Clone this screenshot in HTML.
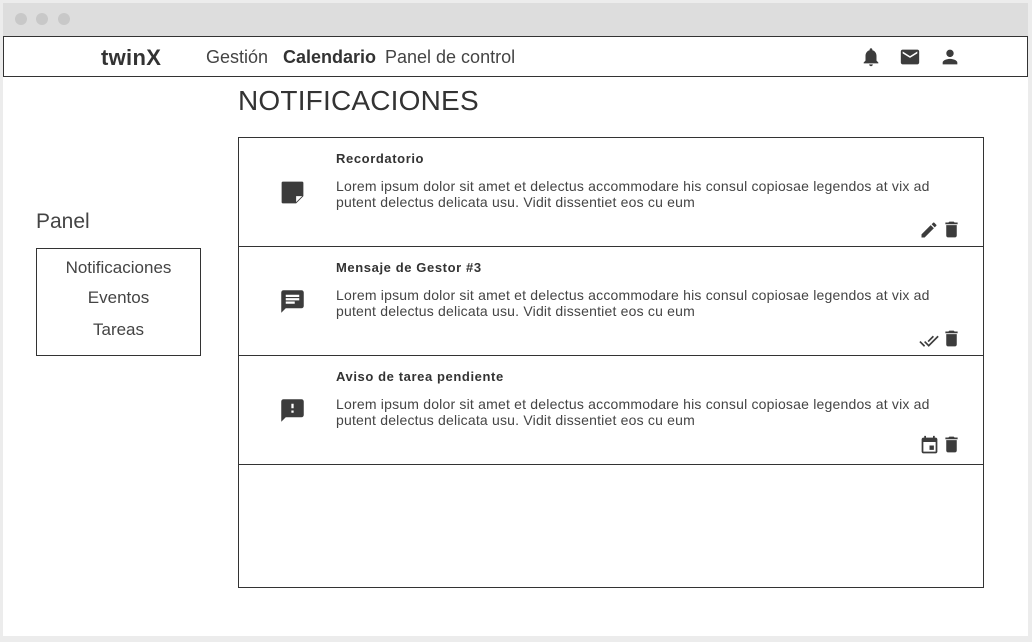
<!DOCTYPE html>
<html><head><meta charset="utf-8"><style>
*{margin:0;padding:0;box-sizing:border-box}
body{width:1032px;height:642px;background:#ececec;font-family:"Liberation Sans",sans-serif;color:#333;position:relative;overflow:hidden}
.win{position:absolute;left:3px;top:3px;width:1025px;height:633px;background:#fff}
.tb{position:absolute;left:0;top:0;width:100%;height:33px;background:#dddddd}
.dot{position:absolute;top:10px;width:12px;height:12px;border-radius:50%;background:#c8c8c8}
.nav{position:absolute;left:3px;top:36px;width:1025px;height:41px;border:1.5px solid #333;background:#fff}
.a{position:absolute;white-space:nowrap}
svg{position:absolute;fill:#3c3c3c}
.list{position:absolute;left:238px;top:137px;width:746px;height:451px;border:1px solid #333}
.row{position:absolute;left:0;width:100%;height:109px;border-bottom:1px solid #333}
.t{position:absolute;left:97px;top:13px;font-size:13px;font-weight:bold;color:#333;letter-spacing:.6px}
.b{position:absolute;left:97px;top:40px;font-size:14px;line-height:16px;color:#444;width:610px;letter-spacing:.2px}
</style></head><body>
<div class="win">
<div class="tb"><div class="dot" style="left:12px"></div><div class="dot" style="left:33px"></div><div class="dot" style="left:55px"></div></div>
</div>
<div class="nav">
<div class="a" style="left:97px;top:8px;font-size:22px;font-weight:bold;letter-spacing:.3px">twinX</div>
<div class="a" style="left:202px;top:10px;font-size:18px;color:#444">Gestión</div>
<div class="a" style="left:279px;top:10px;font-size:18px;font-weight:bold">Calendario</div>
<div class="a" style="left:381px;top:10px;font-size:18px;color:#444">Panel de control</div>
<svg style="left:856px;top:9px" width="22" height="22" viewBox="0 0 24 24"><path d="M12 22c1.1 0 2-.9 2-2h-4c0 1.1.9 2 2 2zm6-6v-5c0-3.07-1.64-5.64-4.5-6.32V4c0-.83-.67-1.5-1.5-1.5s-1.5.67-1.5 1.5v.68C7.630 5.360 6 7.920 6 11v5l-2 2v1h16v-1l-2-2z"/></svg>
<svg style="left:895px;top:9px" width="22" height="22" viewBox="0 0 24 24"><path d="M20 4H4c-1.1 0-2 .9-2 2v12c0 1.1.9 2 2 2h16c1.1 0 2-.9 2-2V6c0-1.1-.9-2-2-2zm0 4l-8 5-8-5V6l8 5 8-5v2z"/></svg>
<svg style="left:935px;top:9px" width="22" height="22" viewBox="0 0 24 24"><path d="M12 12c2.21 0 4-1.79 4-4s-1.79-4-4-4-4 1.79-4 4 1.79 4 4 4zm0 2c-2.67 0-8 1.34-8 4v2h16v-2c0-2.660-5.330-4-8-4z"/></svg>
</div>
<div class="a" style="left:238px;top:85px;font-size:28px;color:#333;letter-spacing:.2px">NOTIFICACIONES</div>
<div class="a" style="left:36px;top:210px;font-size:21px;color:#444">Panel</div>
<div style="position:absolute;left:36px;top:248px;width:165px;height:108px;border:1px solid #333;font-size:17px;color:#444;text-align:center">
<div style="position:absolute;top:9px;width:100%">Notificaciones</div>
<div style="position:absolute;top:39px;width:100%">Eventos</div>
<div style="position:absolute;top:71px;width:100%">Tareas</div>
</div>
<div class="list">
<div class="row" style="top:0">
<svg style="left:39px;top:40px" width="29" height="29" viewBox="0 0 24 24"><path d="M4 3h16c.6 0 1 .4 1 1v11l-6 6H4c-.6 0-1-.4-1-1V4c0-.6.4-1 1-1zm11 17l5-5h-5z"/></svg>
<div class="t">Recordatorio</div>
<div class="b">Lorem ipsum dolor sit amet et delectus accommodare his consul copiosae legendos at vix ad putent delectus delicata usu. Vidit dissentiet eos cu eum</div>
<svg style="left:680px;top:82px" width="20" height="20" viewBox="0 0 24 24"><path d="M3 17.25V21h3.75L17.81 9.94l-3.75-3.75L3 17.25zM20.71 7.04c.39-.39.39-1.02 0-1.41l-2.34-2.34c-.39-.39-1.02-.39-1.41 0l-1.83 1.83 3.75 3.75 1.830-1.830z"/></svg>
<svg style="left:702px;top:81px" width="21" height="21" viewBox="0 0 24 24"><path d="M6 19c0 1.1.9 2 2 2h8c1.1 0 2-.9 2-2V7H6v12zM19 4h-3.5l-1-1h-5l-1 1H5v2h14V4z"/></svg>
</div>
<div class="row" style="top:109px">
<svg style="left:40px;top:41px" width="27" height="27" viewBox="0 0 24 24"><path d="M20 2H4c-1.1 0-2 .9-2 2v18l4-4h14c1.1 0 2-.9 2-2V4c0-1.1-.9-2-2-2zM6 9h12v2H6V9zm8 5H6v-2h8v2zm4-6H6V6h12v2z"/></svg>
<div class="t">Mensaje de Gestor #3</div>
<div class="b">Lorem ipsum dolor sit amet et delectus accommodare his consul copiosae legendos at vix ad putent delectus delicata usu. Vidit dissentiet eos cu eum</div>
<svg style="left:680px;top:84px" width="20" height="20" viewBox="0 0 24 24"><path d="M18 7l-1.41-1.41-6.34 6.34 1.41 1.41L18 7zm4.24-1.41L11.66 16.17 7.48 12l-1.41 1.41L11.66 19l12-12-1.42-1.41zM.41 13.41L6 19l1.41-1.41L1.83 12 .41 13.41z"/></svg>
<svg style="left:702px;top:81px" width="21" height="21" viewBox="0 0 24 24"><path d="M6 19c0 1.1.9 2 2 2h8c1.1 0 2-.9 2-2V7H6v12zM19 4h-3.5l-1-1h-5l-1 1H5v2h14V4z"/></svg>
</div>
<div class="row" style="top:218px">
<svg style="left:40px;top:41px" width="27" height="27" viewBox="0 0 24 24"><path d="M20 2H4c-1.1 0-2 .9-2 2v18l4-4h14c1.1 0 2-.9 2-2V4c0-1.1-.9-2-2-2zm-7 12h-2v-2h2v2zm0-4h-2V6h2v4z"/></svg>
<div class="t">Aviso de tarea pendiente</div>
<div class="b">Lorem ipsum dolor sit amet et delectus accommodare his consul copiosae legendos at vix ad putent delectus delicata usu. Vidit dissentiet eos cu eum</div>
<svg style="left:680px;top:79px" width="21" height="21" viewBox="0 0 24 24"><path d="M17 12h-5v5h5v-5zM16 1v2H8V1H6v2H5c-1.11 0-2 .9-2 2v14c0 1.1.89 2 2 2h14c1.1 0 2-.9 2-2V5c0-1.1-.9-2-2-2h-1V1h-2zm3 18H5V8h14v11z"/></svg>
<svg style="left:702px;top:78px" width="21" height="21" viewBox="0 0 24 24"><path d="M6 19c0 1.1.9 2 2 2h8c1.1 0 2-.9 2-2V7H6v12zM19 4h-3.5l-1-1h-5l-1 1H5v2h14V4z"/></svg>
</div>
</div>
</body></html>
